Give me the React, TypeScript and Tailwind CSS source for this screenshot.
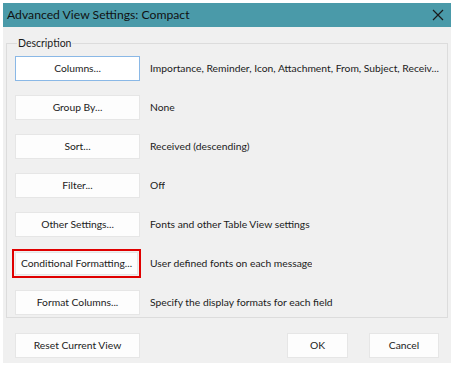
const rows = [
  { label: "Columns...", text: "Importance, Reminder, Icon, Attachment, From, Subject, Receiv...", focused: true },
  { label: "Group By...", text: "None" },
  { label: "Sort...", text: "Received (descending)" },
  { label: "Filter...", text: "Off" },
  { label: "Other Settings...", text: "Fonts and other Table View settings" },
  { label: "Conditional Formatting...", text: "User defined fonts on each message", marked: true },
  { label: "Format Columns...", text: "Specify the display formats for each field" },
];

const btn = "whitespace-nowrap text-[10.3px] leading-none bg-[#fdfdfd] border border-[#e6e6e6]";

const App = () => {
  return (
    <div className="w-[456px] h-[371px] bg-white p-[3px] font-['Lato','Noto_Sans',sans-serif] text-[#1b1b1b]">
      <div className="w-[448px] h-[360px] bg-[#f0f0f0] flex flex-col overflow-hidden">
        {/* title bar */}
        <div className="h-[24px] bg-[#4a9aa9] flex items-center justify-between pl-[4px] pr-[7px]">
          <span className="text-[12.2px] leading-none text-[#111]">Advanced View Settings: Compact</span>
          <svg width="12" height="12" viewBox="0 0 12 12" className="text-[#1a1a1a]">
            <path d="M1 1 L11 11 M11 1 L1 11" stroke="currentColor" strokeWidth="1.2" fill="none" />
          </svg>
        </div>

        <div className="flex flex-col px-[3px] pt-[8px]">
          <fieldset className="min-w-0 border border-[#dcdcdc] pl-[8px] pr-[6px] pb-[2px] pt-[5px]">
            <legend className="ml-[2px] px-[1px] text-[10.5px] leading-[16px]">Description</legend>
            <div className="flex flex-col gap-[14px]">
              {rows.map((row, i) => (
                <div key={i} className="flex items-center min-w-0">
                  {row.marked ? (
                    <div className="shrink-0 -ml-[3px] -my-[2px] border-2 border-[#e00000] p-[1px]">
                      <button className={"block w-[123px] h-[23px] " + btn}>{row.label}</button>
                    </div>
                  ) : (
                    <button
                      className={
                        row.focused
                          ? "shrink-0 w-[125px] h-[25px] whitespace-nowrap text-[10.3px] leading-none bg-white border border-[#8ab8e6]"
                          : "shrink-0 w-[125px] h-[25px] " + btn
                      }
                    >
                      {row.label}
                    </button>
                  )}
                  <span
                    className={
                      (row.marked ? "ml-[9px] " : "ml-[10px] ") +
                      "min-w-0 text-[10.3px] leading-none whitespace-nowrap overflow-hidden"
                    }
                  >
                    {row.text}
                  </span>
                </div>
              ))}
            </div>
          </fieldset>

          <div className="flex items-center mt-[15px] px-[9px]">
            <button className={"w-[125px] h-[25px] " + btn}>Reset Current View</button>
            <button className={"ml-auto w-[61px] h-[25px] " + btn}>OK</button>
            <button className={"ml-[21px] w-[70px] h-[25px] " + btn}>Cancel</button>
          </div>
        </div>
      </div>
    </div>
  );
};

export default App;
